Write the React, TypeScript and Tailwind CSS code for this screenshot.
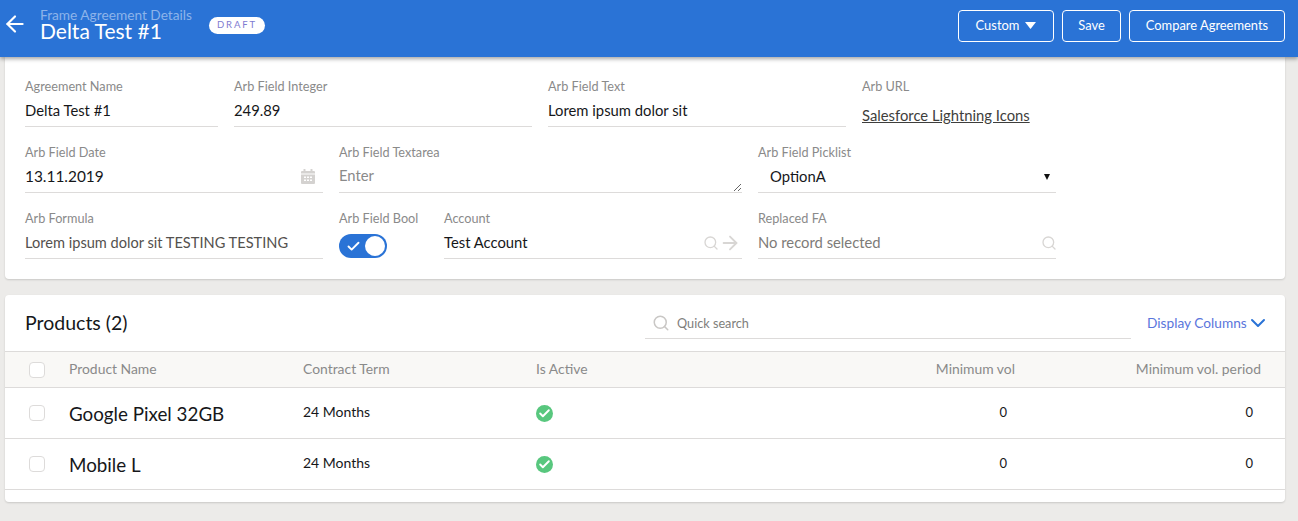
import { ArrowLeft, ArrowRight, Check, ChevronDown, Search } from 'lucide-react'
import type { ReactNode } from 'react'

const FONT = 'font-["Lato","Open_Sans",sans-serif]'

function Field({ label, width, children, line = true }: { label: string; width: string; children: ReactNode; line?: boolean }) {
  return (
    <div className={`${width} shrink-0`}>
      <div className="h-[17px] text-[12.7px] leading-[19px] text-[#8a8a8a]">{label}</div>
      <div className={`mt-[3px] h-[30px] pb-[2px] flex items-center ${line ? 'border-b border-[#dddbda]' : ''}`}>{children}</div>
    </div>
  )
}

function CalendarIcon() {
  return (
    <svg width="14" height="15" viewBox="0 0 14 15" fill="#d4d2d0">
      <rect x="2.5" y="0" width="2" height="3" rx="0.6" />
      <rect x="9.5" y="0" width="2" height="3" rx="0.6" />
      <path d="M1 2h12a1 1 0 0 1 1 1v1.5H0V3a1 1 0 0 1 1-1z" />
      <path
        fillRule="evenodd"
        d="M0 5.5h14V14a1 1 0 0 1-1 1H1a1 1 0 0 1-1-1zM3 7.5v1.5h2V7.5zM6 7.5v1.5h2V7.5zM9 7.5v1.5h2V7.5zM3 10.5V12h2v-1.5zM6 10.5V12h2v-1.5zM9 10.5V12h2v-1.5z"
      />
    </svg>
  )
}

function ActiveIcon() {
  return (
    <div className="w-[17px] h-[17px] rounded-full bg-[#58c77e] flex items-center justify-center">
      <Check size={13} strokeWidth={3.5} className="text-white" />
    </div>
  )
}

const rows = ['Google Pixel 32GB', 'Mobile L']
const COLS = 'grid grid-cols-[64px_234px_233px_240px_239px_246px] items-center'

export default function App() {
  return (
    <div className={`${FONT} h-[521px] overflow-hidden bg-[#ecebe9] text-[#16171a]`}>
      {/* Header */}
      <header className="relative z-10 h-[57px] bg-[#2a73d6] shadow-[0_2px_4px_rgba(0,0,0,0.35)] flex items-center pl-[2px] pr-[13px] pb-[6px]">
        <ArrowLeft size={26} strokeWidth={2} className="text-white -mt-[3px]" />
        <div className="ml-[12px] -mt-[3px]">
          <div className="text-[13.7px] leading-[13px] text-[#8db4ea]">Frame Agreement Details</div>
          <div className="text-[21px] leading-[19px] text-white">Delta Test #1</div>
        </div>
        <div className="ml-[17px] -mt-[1px] w-[56px] h-[17px] rounded-full bg-white flex items-center justify-center text-[9.5px] tracking-[0.2em] text-[#7f7bd1]">
          DRAFT
        </div>
        <div className="ml-auto flex gap-2 text-[12.9px] text-white">
          <button className="w-[96px] h-[32px] rounded border border-white flex items-center justify-center gap-[6px]">
            Custom
            <svg width="11" height="7" viewBox="0 0 11 7" fill="white">
              <path d="M0 0h11L5.5 7z" />
            </svg>
          </button>
          <button className="w-[59px] h-[32px] rounded border border-white">Save</button>
          <button className="w-[156px] h-[32px] rounded border border-white">Compare Agreements</button>
        </div>
      </header>

      <main className="px-[5px] w-[1290px]">
        {/* Agreement form */}
        <section className="w-[1280px] h-[222px] bg-white rounded-b shadow-[0_1px_2px_rgba(0,0,0,0.15)] pt-5 px-5 flex flex-col gap-4 text-[14.8px]">
          <div className="flex gap-4">
            <Field label="Agreement Name" width="w-[193px]">
              <span>Delta Test #1</span>
            </Field>
            <Field label="Arb Field Integer" width="w-[298px]">
              <span>249.89</span>
            </Field>
            <Field label="Arb Field Text" width="w-[298px]">
              <span>Lorem ipsum dolor sit</span>
            </Field>
            <Field label="Arb URL" width="w-[298px]" line={false}>
              <a className="mt-[8px] underline text-[#3e3e3c]">Salesforce Lightning Icons</a>
            </Field>
          </div>

          <div className="flex gap-4">
            <Field label="Arb Field Date" width="w-[298px]">
              <span className="text-[15.4px]">13.11.2019</span>
              <span className="ml-auto mr-[8px] flex">
                <CalendarIcon />
              </span>
            </Field>
            <Field label="Arb Field Textarea" width="w-[403px]">
              <textarea
                placeholder="Enter"
                className="w-full h-[29px] pt-[3px] -mb-[2px] text-[14.8px] leading-[18px] outline-none placeholder:text-[#8a8a8a] resize-y"
              />
            </Field>
            <Field label="Arb Field Picklist" width="w-[298px]">
              <span className="ml-3">OptionA</span>
              <svg width="6" height="6" viewBox="0 0 6 6" fill="#111" className="ml-auto mr-[6px]">
                <path d="M0 0h6L3 6z" />
              </svg>
            </Field>
          </div>

          <div className="flex gap-4">
            <Field label="Arb Formula" width="w-[298px]">
              <span className="text-[14.6px] text-[#54514e]">Lorem ipsum dolor sit TESTING TESTING</span>
            </Field>
            <Field label="Arb Field Bool" width="w-[89px]" line={false}>
              <div className="mt-[6px] w-[48px] h-[24px] rounded-full bg-[#2a73d6] flex items-center justify-between pl-[7px] pr-[2px]">
                <Check size={15} strokeWidth={3} className="text-white" />
                <div className="w-[20px] h-[20px] rounded-full bg-white" />
              </div>
            </Field>
            <Field label="Account" width="w-[298px]">
              <span>Test Account</span>
              <Search size={16} strokeWidth={2} className="ml-auto text-[#d8d6d4]" />
              <ArrowRight size={22} strokeWidth={2} className="mr-[1px] text-[#d8d6d4]" />
            </Field>
            <Field label="Replaced FA" width="w-[298px]">
              <span className="text-[#7d7b78]">No record selected</span>
              <Search size={16} strokeWidth={2} className="ml-auto -mr-[1px] text-[#d8d6d4]" />
            </Field>
          </div>
        </section>

        {/* Products */}
        <section className="mt-4 w-[1280px] h-[207px] bg-white rounded shadow-[0_1px_2px_rgba(0,0,0,0.15)]">
          <div className="h-[56px] flex pl-5">
            <h2 className="w-[620px] shrink-0 pt-[17px] text-[19.5px] leading-[22px]">Products (2)</h2>
            <div className="w-[486px] shrink-0 h-[44px] pt-[19px] border-b border-[#dddbda] flex items-start">
              <Search size={18} strokeWidth={2} className="ml-[7px] text-[#c9c7c5]" />
              <span className="ml-[7px] text-[12.7px] leading-[18px] text-[#807e7b]">Quick search</span>
            </div>
            <div className="ml-4 pt-4 h-10 flex items-center whitespace-nowrap text-[13.7px] leading-[16px] text-[#5a76dc]">
              Display Columns
              <ChevronDown size={24} strokeWidth={2} className="-ml-[1px] text-[#2a73d6]" />
            </div>
          </div>

          <div className={`${COLS} h-[37px] bg-[#f9f8f6] border-y border-[#dddbda] text-[13.9px] text-[#8a8a8a]`}>
            <div className="pl-6">
              <div className="w-4 h-4 bg-white border border-[#dddbda] rounded-sm" />
            </div>
            <div>Product Name</div>
            <div>Contract Term</div>
            <div>Is Active</div>
            <div className="text-right">Minimum vol</div>
            <div className="text-right">Minimum vol. period</div>
          </div>

          {rows.map((name) => (
            <div key={name} className={`${COLS} h-[51px] border-b border-[#dddbda]`}>
              <div className="pl-6">
                <div className="w-4 h-4 bg-white border border-[#dddbda] rounded-sm" />
              </div>
              <div className="text-[18.8px] mt-[2px]">{name}</div>
              <div className="text-[14px] -mt-1">24 Months</div>
              <div>
                <ActiveIcon />
              </div>
              <div className="text-right text-[13px] pr-2">0</div>
              <div className="text-right text-[13px] pr-2">0</div>
            </div>
          ))}
        </section>
      </main>
    </div>
  )
}
